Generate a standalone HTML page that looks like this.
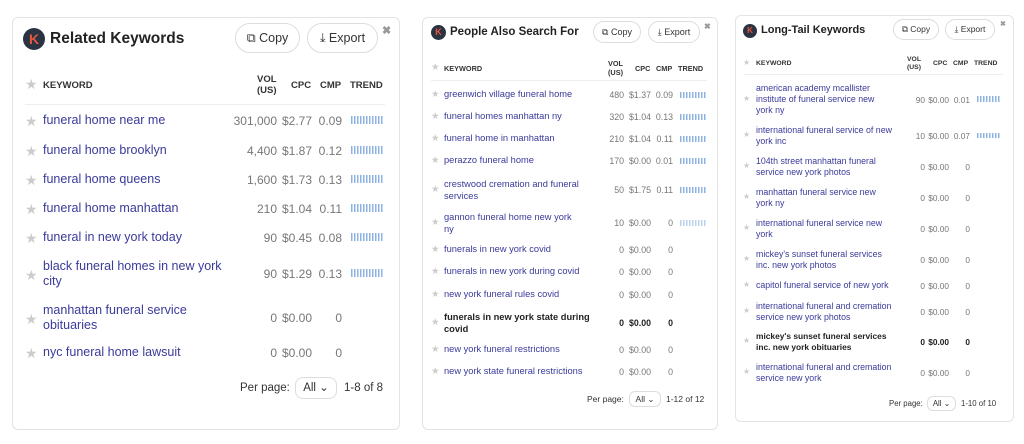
<!DOCTYPE html><html><head><style>
body{margin:0;width:1024px;height:444px;background:#fff;font-family:"Liberation Sans",sans-serif;position:relative;overflow:hidden}
.p{position:absolute;border:1px solid #e3e3e3;border-radius:6px;background:#fff}
.a{position:absolute}
.logo{position:absolute;border-radius:50%;background:#2a3342;color:#e8553d;font-weight:bold;text-align:center}
.t{position:absolute;font-weight:bold;color:#222}
.btn{position:absolute;border:1px solid #ddd;border-radius:16px;color:#333;text-align:center;box-sizing:border-box}
.x{position:absolute;color:#999;font-weight:bold}
.h{position:absolute;font-weight:bold;color:#333}
.k{color:#3a3a9a}
.n{position:absolute;color:#777;text-align:right}
.tr{position:absolute;background:repeating-linear-gradient(90deg,#8fb3e0 0 1.5px,transparent 1.5px 3px)}
.st{position:absolute;color:#ccc}
.ln{position:absolute;height:1px;background:#eee}
.b .k,.b .n{font-weight:bold;color:#222}
.p1 .n{font-size:12px}
.p2 .n{font-size:8.8px}
.p3 .n{font-size:8.3px}
</style></head><body>

<!-- Panel 1 -->
<div class="p p1" style="left:12px;top:17px;width:386px;height:411px;font-size:12.5px">
<div class="logo" style="left:10px;top:10px;width:22px;height:22px;line-height:22px;font-size:14px">K</div>
<div class="t" style="left:37px;top:12px;font-size:15.5px">Related Keywords</div>
<div class="btn" style="left:222px;top:5px;width:65px;height:30px;line-height:28px;font-size:12.5px">⧉ Copy</div>
<div class="btn" style="left:294px;top:5px;width:71px;height:30px;line-height:28px;font-size:12.5px">⤓ Export</div>
<div class="x" style="left:369px;top:6px;font-size:11px">✖</div>
<div class="h" style="left:30px;top:62px;font-size:9.5px">KEYWORD</div>
<div class="st" style="left:12px;top:58px;font-size:14px">★</div>
<div class="h" style="left:244px;top:56px;font-size:9.5px;text-align:center;line-height:11px">VOL<br>(US)</div>
<div class="h" style="left:278px;top:62px;font-size:9.5px">CPC</div>
<div class="h" style="left:307px;top:62px;font-size:9.5px">CMP</div>
<div class="h" style="left:337px;top:62px;font-size:9.5px">TREND</div>
<div class="ln" style="left:12px;right:14px;top:86px"></div>
<div class="a" style="top:94px;left:0;width:386px;height:18px"><span class="st" style="left:12px;top:1px;font-size:14px">★</span><span class="a k" style="left:30px;top:1px">funeral home near me</span><span class="n" style="right:122px;top:2px">301,000</span><span class="n" style="right:87px;top:2px">$2.77</span><span class="n" style="right:57px;top:2px">0.09</span><span class="tr" style="left:338px;top:4px;width:33px;height:8px"></span></div>
<div class="a" style="top:124px;left:0;width:386px;height:18px"><span class="st" style="left:12px;top:1px;font-size:14px">★</span><span class="a k" style="left:30px;top:1px">funeral home brooklyn</span><span class="n" style="right:122px;top:2px">4,400</span><span class="n" style="right:87px;top:2px">$1.87</span><span class="n" style="right:57px;top:2px">0.12</span><span class="tr" style="left:338px;top:4px;width:33px;height:8px"></span></div>
<div class="a" style="top:153px;left:0;width:386px;height:18px"><span class="st" style="left:12px;top:1px;font-size:14px">★</span><span class="a k" style="left:30px;top:1px">funeral home queens</span><span class="n" style="right:122px;top:2px">1,600</span><span class="n" style="right:87px;top:2px">$1.73</span><span class="n" style="right:57px;top:2px">0.13</span><span class="tr" style="left:338px;top:4px;width:33px;height:8px"></span></div>
<div class="a" style="top:182px;left:0;width:386px;height:18px"><span class="st" style="left:12px;top:1px;font-size:14px">★</span><span class="a k" style="left:30px;top:1px">funeral home manhattan</span><span class="n" style="right:122px;top:2px">210</span><span class="n" style="right:87px;top:2px">$1.04</span><span class="n" style="right:57px;top:2px">0.11</span><span class="tr" style="left:338px;top:4px;width:33px;height:8px"></span></div>
<div class="a" style="top:211px;left:0;width:386px;height:18px"><span class="st" style="left:12px;top:1px;font-size:14px">★</span><span class="a k" style="left:30px;top:1px">funeral in new york today</span><span class="n" style="right:122px;top:2px">90</span><span class="n" style="right:87px;top:2px">$0.45</span><span class="n" style="right:57px;top:2px">0.08</span><span class="tr" style="left:338px;top:4px;width:33px;height:8px"></span></div>
<div class="a" style="top:240px;left:0;width:386px;height:34px"><span class="st" style="left:12px;top:9px;font-size:14px">★</span><span class="a k" style="left:30px;top:1px;width:190px;line-height:15px">black funeral homes in new york city</span><span class="n" style="right:122px;top:9px">90</span><span class="n" style="right:87px;top:9px">$1.29</span><span class="n" style="right:57px;top:9px">0.13</span><span class="tr" style="left:338px;top:11px;width:33px;height:8px"></span></div>
<div class="a" style="top:284px;left:0;width:386px;height:34px"><span class="st" style="left:12px;top:9px;font-size:14px">★</span><span class="a k" style="left:30px;top:1px;width:190px;line-height:15px">manhattan funeral service obituaries</span><span class="n" style="right:122px;top:9px">0</span><span class="n" style="right:87px;top:9px">$0.00</span><span class="n" style="right:57px;top:9px">0</span></div>
<div class="a" style="top:326px;left:0;width:386px;height:18px"><span class="st" style="left:12px;top:1px;font-size:14px">★</span><span class="a k" style="left:30px;top:1px">nyc funeral home lawsuit</span><span class="n" style="right:122px;top:2px">0</span><span class="n" style="right:87px;top:2px">$0.00</span><span class="n" style="right:57px;top:2px">0</span></div>
<div class="a" style="left:227px;top:364px;font-size:11.5px;color:#333">Per page:</div>
<div class="btn" style="left:282px;top:359px;width:42px;height:22px;line-height:20px;border-radius:8px;font-size:11.5px">All ⌄</div>
<div class="a" style="left:331px;top:364px;font-size:11.5px;color:#333">1-8 of 8</div>
</div>

<!-- Panel 2 -->
<div class="p p2" style="left:422px;top:17px;width:294px;height:411px;font-size:9.3px">
<div class="logo" style="left:8px;top:7px;width:15px;height:15px;line-height:15px;font-size:9px">K</div>
<div class="t" style="left:27px;top:8px;font-size:11.5px">People Also Search For</div>
<div class="btn" style="left:170px;top:3px;width:48px;height:22px;line-height:20px;font-size:9px">⧉ Copy</div>
<div class="btn" style="left:225px;top:3px;width:52px;height:22px;line-height:20px;font-size:9px">⤓ Export</div>
<div class="x" style="left:281px;top:4px;font-size:8px">✖</div>
<div class="st" style="left:8px;top:44px">★</div>
<div class="h" style="left:21px;top:46px;font-size:7.3px">KEYWORD</div>
<div class="h" style="left:185px;top:41px;font-size:7.3px;text-align:center;line-height:9px">VOL<br>(US)</div>
<div class="h" style="left:212px;top:46px;font-size:7.3px">CPC</div>
<div class="h" style="left:233px;top:46px;font-size:7.3px">CMP</div>
<div class="h" style="left:255px;top:46px;font-size:7.3px">TREND</div>
<div class="ln" style="left:8px;right:10px;top:62px"></div>
<div class="a" style="top:71px;left:0;width:294px;height:12px"><span class="st" style="left:8px;top:0">★</span><span class="a k" style="left:21px;top:0">greenwich village funeral home</span><span class="n" style="right:93px;top:1px">480</span><span class="n" style="right:66px;top:1px">$1.37</span><span class="n" style="right:44px;top:1px">0.09</span><span class="tr" style="left:257px;top:3px;width:26px;height:6px"></span></div>
<div class="a" style="top:93px;left:0;width:294px;height:12px"><span class="st" style="left:8px;top:0">★</span><span class="a k" style="left:21px;top:0">funeral homes manhattan ny</span><span class="n" style="right:93px;top:1px">320</span><span class="n" style="right:66px;top:1px">$1.04</span><span class="n" style="right:44px;top:1px">0.13</span><span class="tr" style="left:257px;top:3px;width:26px;height:6px"></span></div>
<div class="a" style="top:115px;left:0;width:294px;height:12px"><span class="st" style="left:8px;top:0">★</span><span class="a k" style="left:21px;top:0">funeral home in manhattan</span><span class="n" style="right:93px;top:1px">210</span><span class="n" style="right:66px;top:1px">$1.04</span><span class="n" style="right:44px;top:1px">0.11</span><span class="tr" style="left:257px;top:3px;width:26px;height:6px"></span></div>
<div class="a" style="top:137px;left:0;width:294px;height:12px"><span class="st" style="left:8px;top:0">★</span><span class="a k" style="left:21px;top:0">perazzo funeral home</span><span class="n" style="right:93px;top:1px">170</span><span class="n" style="right:66px;top:1px">$0.00</span><span class="n" style="right:44px;top:1px">0.01</span><span class="tr" style="left:257px;top:3px;width:26px;height:6px"></span></div>
<div class="a" style="top:160px;left:0;width:294px;height:24px"><span class="st" style="left:8px;top:6px">★</span><span class="a k" style="left:21px;top:0;width:150px;line-height:12px">crestwood cremation and funeral services</span><span class="n" style="right:93px;top:7px">50</span><span class="n" style="right:66px;top:7px">$1.75</span><span class="n" style="right:44px;top:7px">0.11</span><span class="tr" style="left:257px;top:9px;width:26px;height:6px"></span></div>
<div class="a" style="top:193px;left:0;width:294px;height:24px"><span class="st" style="left:8px;top:6px">★</span><span class="a k" style="left:21px;top:0;width:138px;line-height:12px">gannon funeral home new york ny</span><span class="n" style="right:93px;top:7px">10</span><span class="n" style="right:66px;top:7px">$0.00</span><span class="n" style="right:44px;top:7px">0</span><span class="tr" style="left:257px;top:9px;width:26px;height:6px;opacity:.6"></span></div>
<div class="a" style="top:226px;left:0;width:294px;height:12px"><span class="st" style="left:8px;top:0">★</span><span class="a k" style="left:21px;top:0">funerals in new york covid</span><span class="n" style="right:93px;top:1px">0</span><span class="n" style="right:66px;top:1px">$0.00</span><span class="n" style="right:44px;top:1px">0</span></div>
<div class="a" style="top:248px;left:0;width:294px;height:12px"><span class="st" style="left:8px;top:0">★</span><span class="a k" style="left:21px;top:0">funerals in new york during covid</span><span class="n" style="right:93px;top:1px">0</span><span class="n" style="right:66px;top:1px">$0.00</span><span class="n" style="right:44px;top:1px">0</span></div>
<div class="a" style="top:271px;left:0;width:294px;height:12px"><span class="st" style="left:8px;top:0">★</span><span class="a k" style="left:21px;top:0">new york funeral rules covid</span><span class="n" style="right:93px;top:1px">0</span><span class="n" style="right:66px;top:1px">$0.00</span><span class="n" style="right:44px;top:1px">0</span></div>
<div class="a b" style="top:293px;left:0;width:294px;height:24px"><span class="st" style="left:8px;top:6px">★</span><span class="a k" style="left:21px;top:0;width:150px;line-height:12px">funerals in new york state during covid</span><span class="n" style="right:93px;top:7px">0</span><span class="n" style="right:66px;top:7px">$0.00</span><span class="n" style="right:44px;top:7px">0</span></div>
<div class="a" style="top:326px;left:0;width:294px;height:12px"><span class="st" style="left:8px;top:0">★</span><span class="a k" style="left:21px;top:0">new york funeral restrictions</span><span class="n" style="right:93px;top:1px">0</span><span class="n" style="right:66px;top:1px">$0.00</span><span class="n" style="right:44px;top:1px">0</span></div>
<div class="a" style="top:348px;left:0;width:294px;height:12px"><span class="st" style="left:8px;top:0">★</span><span class="a k" style="left:21px;top:0">new york state funeral restrictions</span><span class="n" style="right:93px;top:1px">0</span><span class="n" style="right:66px;top:1px">$0.00</span><span class="n" style="right:44px;top:1px">0</span></div>
<div class="a" style="left:164px;top:376px;font-size:8.5px;color:#333">Per page:</div>
<div class="btn" style="left:206px;top:373px;width:32px;height:16px;line-height:14px;border-radius:6px;font-size:8.5px">All ⌄</div>
<div class="a" style="left:243px;top:376px;font-size:8.5px;color:#333">1-12 of 12</div>
</div>

<!-- Panel 3 -->
<div class="p p3" style="left:735px;top:15px;width:277px;height:405px;font-size:8.8px">
<div class="logo" style="left:7px;top:8px;width:14px;height:14px;line-height:14px;font-size:8px">K</div>
<div class="t" style="left:25px;top:8px;font-size:11px">Long-Tail Keywords</div>
<div class="btn" style="left:157px;top:3px;width:46px;height:21px;line-height:19px;font-size:8.5px">⧉ Copy</div>
<div class="btn" style="left:209px;top:3px;width:50px;height:21px;line-height:19px;font-size:8.5px">⤓ Export</div>
<div class="x" style="left:264px;top:4px;font-size:7px">✖</div>
<div class="st" style="left:7px;top:42px;font-size:8px">★</div>
<div class="h" style="left:20px;top:44px;font-size:6.8px">KEYWORD</div>
<div class="h" style="left:171px;top:40px;font-size:6.8px;text-align:center;line-height:8px">VOL<br>(US)</div>
<div class="h" style="left:197px;top:44px;font-size:6.8px">CPC</div>
<div class="h" style="left:217px;top:44px;font-size:6.8px">CMP</div>
<div class="h" style="left:238px;top:44px;font-size:6.8px">TREND</div>
<div class="ln" style="left:8px;right:10px;top:58px"></div>
<div class="a" style="top:67px;left:0;width:277px;height:33px"><span class="st" style="left:7px;top:11px;font-size:8px">★</span><span class="a k" style="left:20px;top:0;width:135px;line-height:11px">american academy mcallister institute of funeral service new york ny</span><span class="n" style="right:88px;top:12px">90</span><span class="n" style="right:64px;top:12px">$0.00</span><span class="n" style="right:43px;top:12px">0.01</span><span class="tr" style="left:241px;top:13px;width:23px;height:6px"></span></div>
<div class="a" style="top:109px;left:0;width:277px;height:22px"><span class="st" style="left:7px;top:5px;font-size:8px">★</span><span class="a k" style="left:20px;top:0;width:145px;line-height:11px">international funeral service of new york inc</span><span class="n" style="right:88px;top:6px">10</span><span class="n" style="right:64px;top:6px">$0.00</span><span class="n" style="right:43px;top:6px">0.07</span><span class="tr" style="left:241px;top:8px;width:23px;height:5px"></span></div>
<div class="a" style="top:140px;left:0;width:277px;height:22px"><span class="st" style="left:7px;top:5px;font-size:8px">★</span><span class="a k" style="left:20px;top:0;width:135px;line-height:11px">104th street manhattan funeral service new york photos</span><span class="n" style="right:88px;top:6px">0</span><span class="n" style="right:64px;top:6px">$0.00</span><span class="n" style="right:43px;top:6px">0</span></div>
<div class="a" style="top:171px;left:0;width:277px;height:22px"><span class="st" style="left:7px;top:5px;font-size:8px">★</span><span class="a k" style="left:20px;top:0;width:135px;line-height:11px">manhattan funeral service new york ny</span><span class="n" style="right:88px;top:6px">0</span><span class="n" style="right:64px;top:6px">$0.00</span><span class="n" style="right:43px;top:6px">0</span></div>
<div class="a" style="top:202px;left:0;width:277px;height:22px"><span class="st" style="left:7px;top:5px;font-size:8px">★</span><span class="a k" style="left:20px;top:0;width:135px;line-height:11px">international funeral service new york</span><span class="n" style="right:88px;top:6px">0</span><span class="n" style="right:64px;top:6px">$0.00</span><span class="n" style="right:43px;top:6px">0</span></div>
<div class="a" style="top:233px;left:0;width:277px;height:22px"><span class="st" style="left:7px;top:5px;font-size:8px">★</span><span class="a k" style="left:20px;top:0;width:135px;line-height:11px">mickey's sunset funeral services inc. new york photos</span><span class="n" style="right:88px;top:6px">0</span><span class="n" style="right:64px;top:6px">$0.00</span><span class="n" style="right:43px;top:6px">0</span></div>
<div class="a" style="top:264px;left:0;width:277px;height:11px"><span class="st" style="left:7px;top:0;font-size:8px">★</span><span class="a k" style="left:20px;top:0">capitol funeral service of new york</span><span class="n" style="right:88px;top:1px">0</span><span class="n" style="right:64px;top:1px">$0.00</span><span class="n" style="right:43px;top:1px">0</span></div>
<div class="a" style="top:285px;left:0;width:277px;height:22px"><span class="st" style="left:7px;top:5px;font-size:8px">★</span><span class="a k" style="left:20px;top:0;width:140px;line-height:11px">international funeral and cremation service new york photos</span><span class="n" style="right:88px;top:6px">0</span><span class="n" style="right:64px;top:6px">$0.00</span><span class="n" style="right:43px;top:6px">0</span></div>
<div class="a b" style="top:315px;left:0;width:277px;height:22px"><span class="st" style="left:7px;top:5px;font-size:8px">★</span><span class="a k" style="left:20px;top:0;width:150px;line-height:11px;font-size:8.4px;white-space:nowrap">mickey's sunset funeral services<br>inc. new york obituaries</span><span class="n" style="right:88px;top:6px">0</span><span class="n" style="right:64px;top:6px">$0.00</span><span class="n" style="right:43px;top:6px">0</span></div>
<div class="a" style="top:346px;left:0;width:277px;height:22px"><span class="st" style="left:7px;top:5px;font-size:8px">★</span><span class="a k" style="left:20px;top:0;width:140px;line-height:11px">international funeral and cremation service new york</span><span class="n" style="right:88px;top:6px">0</span><span class="n" style="right:64px;top:6px">$0.00</span><span class="n" style="right:43px;top:6px">0</span></div>
<div class="a" style="left:153px;top:383px;font-size:7.8px;color:#333">Per page:</div>
<div class="btn" style="left:191px;top:380px;width:29px;height:15px;line-height:13px;border-radius:6px;font-size:7.8px">All ⌄</div>
<div class="a" style="left:225px;top:383px;font-size:7.8px;color:#333">1-10 of 10</div>
</div>
</body></html>
